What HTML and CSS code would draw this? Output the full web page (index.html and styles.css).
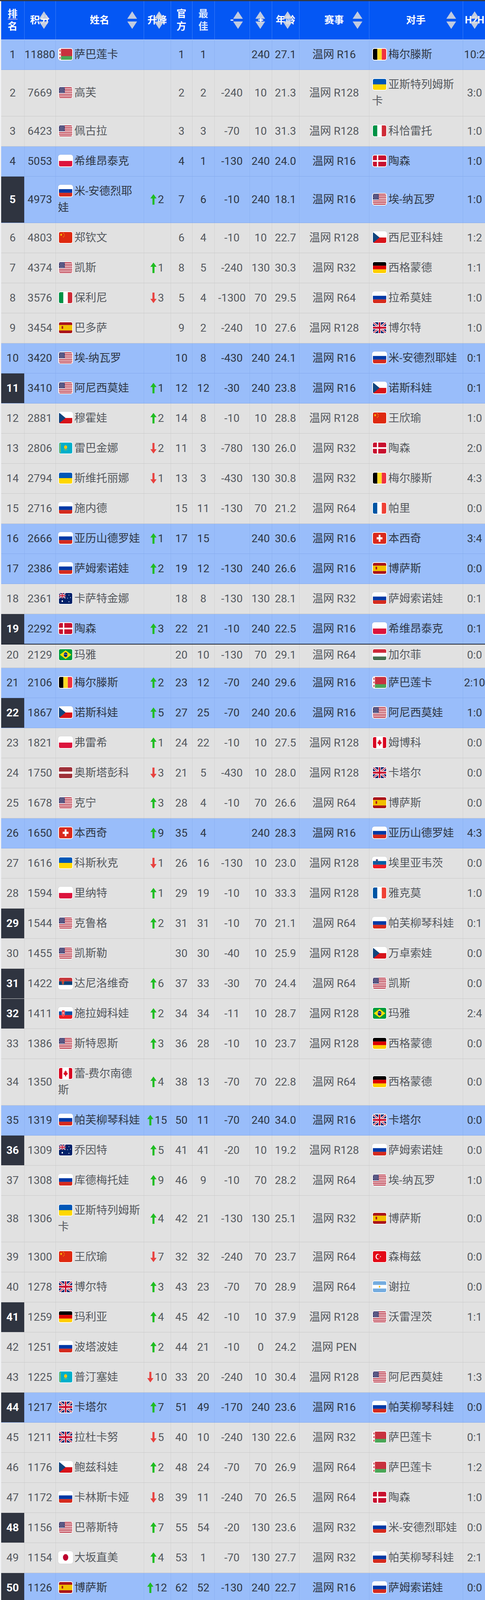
FILE: index.html
```html
<!DOCTYPE html>
<html lang="zh">
<head>
<meta charset="utf-8">
<title>WTA 排名</title>
<link rel="stylesheet" href="styles.css">
</head>
<body>
<svg class="defs" xmlns="http://www.w3.org/2000/svg">
<symbol id="so" viewBox="0 0 27 47"><path d="M13.5 1L26 20H1zM1 27h25L13.5 46z"/></symbol>
<symbol id="au" viewBox="0 0 16 27"><path d="M8 0L16 11H10.6V27H5.4V11H0z"/></symbol>
<symbol id="ad" viewBox="0 0 16 27"><path d="M5.4 0h5.2v16H16L8 27 0 16h5.4z"/></symbol>
<symbol id="blr" viewBox="0 0 30 20" preserveAspectRatio="none"><rect width="30" height="20" fill="#c8313e"/><rect y="13.3" width="30" height="6.7" fill="#4aa657"/><rect width="4.5" height="20" fill="#fff"/><path d="M2.25 1l1.5 2.5-1.5 2.5-1.5-2.5zM2.25 7.5l1.5 2.5-1.5 2.5-1.5-2.5zM2.25 14l1.5 2.5-1.5 2.5-1.5-2.5z" fill="#c8313e"/></symbol>
<symbol id="usa" viewBox="0 0 30 20" preserveAspectRatio="none"><rect width="30" height="20" fill="#fff"/><path fill="#b22234" d="M0 0h30v1.54H0zM0 3.08h30v1.54H0zM0 6.15h30v1.54H0zM0 9.23h30v1.54H0zM0 12.31h30v1.54H0zM0 15.38h30v1.54H0zM0 18.46h30v1.54H0z"/><rect width="13" height="10.77" fill="#3c3b6e"/><g fill="#fff"><circle cx="2" cy="1.8" r=".6"/><circle cx="5" cy="1.8" r=".6"/><circle cx="8" cy="1.8" r=".6"/><circle cx="11" cy="1.8" r=".6"/><circle cx="3.5" cy="4.2" r=".6"/><circle cx="6.5" cy="4.2" r=".6"/><circle cx="9.5" cy="4.2" r=".6"/><circle cx="2" cy="6.6" r=".6"/><circle cx="5" cy="6.6" r=".6"/><circle cx="8" cy="6.6" r=".6"/><circle cx="11" cy="6.6" r=".6"/><circle cx="3.5" cy="9" r=".6"/><circle cx="6.5" cy="9" r=".6"/><circle cx="9.5" cy="9" r=".6"/></g></symbol>
<symbol id="pol" viewBox="0 0 30 20" preserveAspectRatio="none"><rect width="30" height="10" fill="#fff"/><rect y="10" width="30" height="10" fill="#dc143c"/></symbol>
<symbol id="rus" viewBox="0 0 30 20" preserveAspectRatio="none"><rect width="30" height="6.7" fill="#fff"/><rect y="6.6" width="30" height="6.8" fill="#0039a6"/><rect y="13.3" width="30" height="6.7" fill="#d52b1e"/></symbol>
<symbol id="chn" viewBox="0 0 30 20" preserveAspectRatio="none"><rect width="30" height="20" fill="#de2910"/><g fill="#ffde00"><polygon points="5,2 5.68,4.07 7.85,4.07 6.09,5.36 6.76,7.43 5,6.15 3.24,7.43 3.91,5.36 2.15,4.07 4.32,4.07"/><circle cx="10" cy="2" r=".7"/><circle cx="12" cy="4" r=".7"/><circle cx="12" cy="7" r=".7"/><circle cx="10" cy="9" r=".7"/></g></symbol>
<symbol id="cze" viewBox="0 0 30 20" preserveAspectRatio="none"><rect width="30" height="10" fill="#fff"/><rect y="10" width="30" height="10" fill="#d7141a"/><polygon points="0,0 15,10 0,20" fill="#11457e"/></symbol>
<symbol id="ger" viewBox="0 0 30 20" preserveAspectRatio="none"><rect width="30" height="6.7" fill="#000"/><rect y="6.6" width="30" height="6.8" fill="#dd0000"/><rect y="13.3" width="30" height="6.7" fill="#ffce00"/></symbol>
<symbol id="ita" viewBox="0 0 30 20" preserveAspectRatio="none"><rect width="10" height="20" fill="#009246"/><rect x="10" width="10" height="20" fill="#fff"/><rect x="20" width="10" height="20" fill="#ce2b37"/></symbol>
<symbol id="esp" viewBox="0 0 30 20" preserveAspectRatio="none"><rect width="30" height="20" fill="#aa151b"/><rect y="5" width="30" height="10" fill="#f1bf00"/><rect x="6" y="7" width="3.5" height="5" rx="1" fill="#ad1519"/></symbol>
<symbol id="gbr" viewBox="0 0 30 20" preserveAspectRatio="none"><rect width="30" height="20" fill="#012169"/><path d="M0 0L30 20M30 0L0 20" stroke="#fff" stroke-width="4"/><path d="M0 0L30 20M30 0L0 20" stroke="#c8102e" stroke-width="1.4"/><path d="M15 0v20M0 10h30" stroke="#fff" stroke-width="6"/><path d="M15 0v20M0 10h30" stroke="#c8102e" stroke-width="3.4"/></symbol>
<symbol id="den" viewBox="0 0 30 20" preserveAspectRatio="none"><rect width="30" height="20" fill="#c8102e"/><rect x="9" width="3" height="20" fill="#fff"/><rect y="8.5" width="30" height="3" fill="#fff"/></symbol>
<symbol id="kaz" viewBox="0 0 30 20" preserveAspectRatio="none"><rect width="30" height="20" fill="#00afca"/><circle cx="15" cy="8.5" r="3.5" fill="#fec50c"/><path d="M9 12.5q6 3 12 0q-6 1.5-12 0" fill="#fec50c"/><rect x="1.5" y="1" width="1.5" height="18" fill="#fec50c"/></symbol>
<symbol id="ukr" viewBox="0 0 30 20" preserveAspectRatio="none"><rect width="30" height="10" fill="#0057b7"/><rect y="10" width="30" height="10" fill="#ffd700"/></symbol>
<symbol id="bel" viewBox="0 0 30 20" preserveAspectRatio="none"><rect width="10" height="20" fill="#000"/><rect x="10" width="10" height="20" fill="#fdda24"/><rect x="20" width="10" height="20" fill="#ef3340"/></symbol>
<symbol id="fra" viewBox="0 0 30 20" preserveAspectRatio="none"><rect width="10" height="20" fill="#0055a4"/><rect x="10" width="10" height="20" fill="#fff"/><rect x="20" width="10" height="20" fill="#ef4135"/></symbol>
<symbol id="sui" viewBox="0 0 30 20" preserveAspectRatio="none"><rect width="30" height="20" fill="#da291c"/><path d="M13 3.5h4v4.5h4.5v4H17v4.5h-4V12H8.5V8H13z" fill="#fff"/></symbol>
<symbol id="aus" viewBox="0 0 30 20" preserveAspectRatio="none"><rect width="30" height="20" fill="#012169"/><use href="#gbr" width="15" height="10"/><g fill="#fff"><circle cx="7.5" cy="15" r="1.6"/><circle cx="22.5" cy="4" r=".8"/><circle cx="26" cy="8.5" r=".8"/><circle cx="22.5" cy="16" r=".9"/><circle cx="19.5" cy="9.5" r=".8"/></g></symbol>
<symbol id="bra" viewBox="0 0 30 20" preserveAspectRatio="none"><rect width="30" height="20" fill="#009c3b"/><polygon points="15,2 28,10 15,18 2,10" fill="#ffdf00"/><circle cx="15" cy="10" r="4.2" fill="#002776"/><path d="M11 9.3q4-1.3 8 1" stroke="#fff" stroke-width=".7" fill="none"/></symbol>
<symbol id="hun" viewBox="0 0 30 20" preserveAspectRatio="none"><rect width="30" height="6.7" fill="#ce2939"/><rect y="6.6" width="30" height="6.8" fill="#fff"/><rect y="13.3" width="30" height="6.7" fill="#477050"/></symbol>
<symbol id="can" viewBox="0 0 30 20" preserveAspectRatio="none"><rect width="30" height="20" fill="#fff"/><rect width="7.5" height="20" fill="#d80621"/><rect x="22.5" width="7.5" height="20" fill="#d80621"/><polygon points="15,4 16.2,6.5 17.8,6 17.2,9.5 19.5,8 19,10 20.5,10.5 16,13.5 16.3,15.5 15.3,15 15,17 14.7,15 13.7,15.5 14,13.5 9.5,10.5 11,10 10.5,8 12.8,9.5 12.2,6 13.8,6.5" fill="#d80621"/></symbol>
<symbol id="lat" viewBox="0 0 30 20" preserveAspectRatio="none"><rect width="30" height="20" fill="#9e3039"/><rect y="8" width="30" height="4" fill="#fff"/></symbol>
<symbol id="slo" viewBox="0 0 30 20" preserveAspectRatio="none"><rect width="30" height="6.7" fill="#fff"/><rect y="6.6" width="30" height="6.8" fill="#005da4"/><rect y="13.3" width="30" height="6.7" fill="#ed1c24"/><path d="M7 3.5h4v4.5q0 2-2 2.8q-2-.8-2-2.8z" fill="#005da4" stroke="#ed1c24" stroke-width=".4"/></symbol>
<symbol id="srb" viewBox="0 0 30 20" preserveAspectRatio="none"><rect width="30" height="6.7" fill="#c6363c"/><rect y="6.6" width="30" height="6.8" fill="#0c4076"/><rect y="13.3" width="30" height="6.7" fill="#fff"/><path d="M7 4.5h4v5q0 2.2-2 3q-2-.8-2-3z" fill="#c6363c" stroke="#edb92e" stroke-width=".5"/></symbol>
<symbol id="svk" viewBox="0 0 30 20" preserveAspectRatio="none"><rect width="30" height="6.7" fill="#fff"/><rect y="6.6" width="30" height="6.8" fill="#0b4ea2"/><rect y="13.3" width="30" height="6.7" fill="#ee1c25"/><path d="M6.5 4.5h6.5v6q0 3.5-3.25 5q-3.250-1.5-3.25-5z" fill="#ee1c25" stroke="#fff" stroke-width=".6"/><path d="M9.3 6.5h.9v6.5h-.9zM8.3 8h2.9v.8H8.3zM7.9 9.8h3.7v.8H7.9z" fill="#fff"/></symbol>
<symbol id="arg" viewBox="0 0 30 20" preserveAspectRatio="none"><rect width="30" height="20" fill="#74acdf"/><rect y="6.7" width="30" height="6.6" fill="#fff"/><circle cx="15" cy="10" r="1.7" fill="#f6b40e"/></symbol>
<symbol id="tur" viewBox="0 0 30 20" preserveAspectRatio="none"><rect width="30" height="20" fill="#e30a17"/><circle cx="11" cy="10" r="5" fill="#fff"/><circle cx="12.3" cy="10" r="4" fill="#e30a17"/><polygon transform="translate(14.25 7.25) scale(.55)" points="5,2 5.68,4.07 7.85,4.07 6.09,5.36 6.76,7.43 5,6.15 3.24,7.43 3.91,5.36 2.15,4.07 4.32,4.07" fill="#fff"/></symbol>
<symbol id="jpn" viewBox="0 0 30 20" preserveAspectRatio="none"><rect width="30" height="20" fill="#fff"/><circle cx="15" cy="10" r="6" fill="#bc002d"/></symbol>
<symbol id="rou" viewBox="0 0 30 20" preserveAspectRatio="none"><rect width="10" height="20" fill="#002b7f"/><rect x="10" width="10" height="20" fill="#fcd116"/><rect x="20" width="10" height="20" fill="#ce1126"/></symbol>
<symbol id="cro" viewBox="0 0 30 20" preserveAspectRatio="none"><rect width="30" height="6.7" fill="#ff0000"/><rect y="6.6" width="30" height="6.8" fill="#fff"/><rect y="13.3" width="30" height="6.7" fill="#171796"/><rect x="12.5" y="3.8" width="5" height="1.2" fill="#0093dd"/><rect x="12.5" y="5" width="5" height="6.25" fill="#ff0000"/><path fill="#fff" d="M12.5 5h1.25v1.25h-1.25zM15 5h1.25v1.25H15zM13.75 6.25H15V7.5h-1.25zM16.25 6.25h1.25V7.5h-1.25zM12.5 7.5h1.25v1.25h-1.25zM15 7.5h1.25v1.25H15zM13.75 8.75H15V10h-1.25zM16.25 8.75h1.25V10h-1.25zM12.5 10h1.25v1.25h-1.25zM15 10h1.25v1.25H15z"/></symbol>
<symbol id="arm" viewBox="0 0 30 20" preserveAspectRatio="none"><rect width="30" height="6.7" fill="#d90012"/><rect y="6.6" width="30" height="6.8" fill="#0033a0"/><rect y="13.3" width="30" height="6.7" fill="#f2a800"/></symbol>
<symbol id="phi" viewBox="0 0 30 20" preserveAspectRatio="none"><rect width="30" height="10" fill="#0038a8"/><rect y="10" width="30" height="10" fill="#ce1126"/><polygon points="0,0 17,10 0,20" fill="#fff"/><g fill="#fcd116"><circle cx="5.5" cy="10" r="2"/><circle cx="1.8" cy="2.5" r=".8"/><circle cx="1.8" cy="17.5" r=".8"/><circle cx="13.5" cy="10" r=".8"/></g></symbol>
<symbol id="ned" viewBox="0 0 30 20" preserveAspectRatio="none"><rect width="30" height="6.7" fill="#ae1c28"/><rect y="6.6" width="30" height="6.8" fill="#fff"/><rect y="13.3" width="30" height="6.7" fill="#21468b"/></symbol>
<symbol id="col" viewBox="0 0 30 20" preserveAspectRatio="none"><rect width="30" height="10" fill="#fcd116"/><rect y="10" width="30" height="5" fill="#003893"/><rect y="15" width="30" height="5" fill="#ce1126"/></symbol>
<symbol id="mex" viewBox="0 0 30 20" preserveAspectRatio="none"><rect width="10" height="20" fill="#006847"/><rect x="10" width="10" height="20" fill="#fff"/><rect x="20" width="10" height="20" fill="#ce1126"/><circle cx="15" cy="10" r="2.4" fill="#8c5a2b"/></symbol>
<symbol id="tun" viewBox="0 0 30 20" preserveAspectRatio="none"><rect width="30" height="20" fill="#e70013"/><circle cx="15" cy="10" r="5.5" fill="#fff"/><circle cx="15" cy="10" r="4" fill="#e70013"/><circle cx="16.2" cy="10" r="3.3" fill="#fff"/><polygon transform="translate(14.6 8.1) scale(.38)" points="5,2 5.68,4.07 7.85,4.07 6.09,5.36 6.76,7.43 5,6.15 3.24,7.43 3.91,5.36 2.15,4.07 4.32,4.07" fill="#e70013"/></symbol>
<symbol id="bul" viewBox="0 0 30 20" preserveAspectRatio="none"><rect width="30" height="6.7" fill="#fff"/><rect y="6.6" width="30" height="6.8" fill="#00966e"/><rect y="13.3" width="30" height="6.7" fill="#d62612"/></symbol>
</svg>

<div class="board">
<table class="rank-table">
<colgroup><col class="w-rk"><col class="w-pt"><col class="w-nm"><col class="w-ch"><col class="w-of"><col class="w-be"><col class="w-mi"><col class="w-pl"><col class="w-ag"><col class="w-ev"><col class="w-op"><col class="w-hh"></colgroup>
<thead>
<tr>
<th class="h-stack"><span class="mark">排</span>名</th>
<th>积分<svg class="so"><use href="#so"/></svg></th>
<th>姓名<svg class="so"><use href="#so"/></svg></th>
<th>升降<svg class="so"><use href="#so"/></svg></th>
<th class="h-stack">官方</th>
<th class="h-stack h-dim">最佳</th>
<th>-<svg class="so"><use href="#so"/></svg></th>
<th>+<svg class="so"><use href="#so"/></svg></th>
<th>年龄<svg class="so"><use href="#so"/></svg></th>
<th>赛事<svg class="so"><use href="#so"/></svg></th>
<th>对手<svg class="so"><use href="#so"/></svg></th>
<th>H2H<svg class="so"><use href="#so"/></svg></th>
</tr>
</thead>
<tbody>
<tr class="b"><td>1</td><td>11880</td><td class="nm"><svg class="fl"><use href="#blr"/></svg>萨巴莲卡</td><td class="ch"></td><td>1</td><td>1</td><td></td><td>240</td><td>27.1</td><td>温网 R16</td><td class="op"><svg class="fl"><use href="#bel"/></svg>梅尔滕斯</td><td>10:2</td></tr>
<tr><td>2</td><td>7669</td><td class="nm"><svg class="fl"><use href="#usa"/></svg>高芙</td><td class="ch"></td><td>2</td><td>2</td><td>-240</td><td>10</td><td>21.3</td><td>温网 R128</td><td class="op"><svg class="fl"><use href="#ukr"/></svg>亚斯特列姆斯卡</td><td>3:0</td></tr>
<tr><td>3</td><td>6423</td><td class="nm"><svg class="fl"><use href="#usa"/></svg>佩古拉</td><td class="ch"></td><td>3</td><td>3</td><td>-70</td><td>10</td><td>31.3</td><td>温网 R128</td><td class="op"><svg class="fl"><use href="#ita"/></svg>科恰雷托</td><td>1:0</td></tr>
<tr class="b"><td>4</td><td>5053</td><td class="nm"><svg class="fl"><use href="#pol"/></svg>希维昂泰克</td><td class="ch"></td><td>4</td><td>1</td><td>-130</td><td>240</td><td>24.0</td><td>温网 R16</td><td class="op"><svg class="fl"><use href="#den"/></svg>陶森</td><td>1:0</td></tr>
<tr class="b"><td class="dk">5</td><td>4973</td><td class="nm"><svg class="fl"><use href="#rus"/></svg>米-安德烈耶娃</td><td class="ch"><svg class="ar up"><use href="#au"/></svg>2</td><td>7</td><td>6</td><td>-10</td><td>240</td><td>18.1</td><td>温网 R16</td><td class="op"><svg class="fl"><use href="#usa"/></svg>埃-纳瓦罗</td><td>1:0</td></tr>
<tr><td>6</td><td>4803</td><td class="nm"><svg class="fl"><use href="#chn"/></svg>郑钦文</td><td class="ch"></td><td>6</td><td>4</td><td>-10</td><td>10</td><td>22.7</td><td>温网 R128</td><td class="op"><svg class="fl"><use href="#cze"/></svg>西尼亚科娃</td><td>1:2</td></tr>
<tr><td>7</td><td>4374</td><td class="nm"><svg class="fl"><use href="#usa"/></svg>凯斯</td><td class="ch"><svg class="ar up"><use href="#au"/></svg>1</td><td>8</td><td>5</td><td>-240</td><td>130</td><td>30.3</td><td>温网 R32</td><td class="op"><svg class="fl"><use href="#ger"/></svg>西格蒙德</td><td>1:1</td></tr>
<tr><td>8</td><td>3576</td><td class="nm"><svg class="fl"><use href="#ita"/></svg>保利尼</td><td class="ch"><svg class="ar dn"><use href="#ad"/></svg>3</td><td>5</td><td>4</td><td>-1300</td><td>70</td><td>29.5</td><td>温网 R64</td><td class="op"><svg class="fl"><use href="#rus"/></svg>拉希莫娃</td><td>1:0</td></tr>
<tr><td>9</td><td>3454</td><td class="nm"><svg class="fl"><use href="#esp"/></svg>巴多萨</td><td class="ch"></td><td>9</td><td>2</td><td>-240</td><td>10</td><td>27.6</td><td>温网 R128</td><td class="op"><svg class="fl"><use href="#gbr"/></svg>博尔特</td><td>1:0</td></tr>
<tr class="b"><td>10</td><td>3420</td><td class="nm"><svg class="fl"><use href="#usa"/></svg>埃-纳瓦罗</td><td class="ch"></td><td>10</td><td>8</td><td>-430</td><td>240</td><td>24.1</td><td>温网 R16</td><td class="op"><svg class="fl"><use href="#rus"/></svg>米-安德烈耶娃</td><td>0:1</td></tr>
<tr class="b"><td class="dk">11</td><td>3410</td><td class="nm"><svg class="fl"><use href="#usa"/></svg>阿尼西莫娃</td><td class="ch"><svg class="ar up"><use href="#au"/></svg>1</td><td>12</td><td>12</td><td>-30</td><td>240</td><td>23.8</td><td>温网 R16</td><td class="op"><svg class="fl"><use href="#cze"/></svg>诺斯科娃</td><td>0:1</td></tr>
<tr><td>12</td><td>2881</td><td class="nm"><svg class="fl"><use href="#cze"/></svg>穆霍娃</td><td class="ch"><svg class="ar up"><use href="#au"/></svg>2</td><td>14</td><td>8</td><td>-10</td><td>10</td><td>28.8</td><td>温网 R128</td><td class="op"><svg class="fl"><use href="#chn"/></svg>王欣瑜</td><td>1:0</td></tr>
<tr><td>13</td><td>2806</td><td class="nm"><svg class="fl"><use href="#kaz"/></svg>雷巴金娜</td><td class="ch"><svg class="ar dn"><use href="#ad"/></svg>2</td><td>11</td><td>3</td><td>-780</td><td>130</td><td>26.0</td><td>温网 R32</td><td class="op"><svg class="fl"><use href="#den"/></svg>陶森</td><td>2:0</td></tr>
<tr><td>14</td><td>2794</td><td class="nm"><svg class="fl"><use href="#ukr"/></svg>斯维托丽娜</td><td class="ch"><svg class="ar dn"><use href="#ad"/></svg>1</td><td>13</td><td>3</td><td>-430</td><td>130</td><td>30.8</td><td>温网 R32</td><td class="op"><svg class="fl"><use href="#bel"/></svg>梅尔滕斯</td><td>4:3</td></tr>
<tr><td>15</td><td>2716</td><td class="nm"><svg class="fl"><use href="#rus"/></svg>施内德</td><td class="ch"></td><td>15</td><td>11</td><td>-130</td><td>70</td><td>21.2</td><td>温网 R64</td><td class="op"><svg class="fl"><use href="#fra"/></svg>帕里</td><td>0:0</td></tr>
<tr class="b"><td>16</td><td>2666</td><td class="nm"><svg class="fl"><use href="#rus"/></svg>亚历山德罗娃</td><td class="ch"><svg class="ar up"><use href="#au"/></svg>1</td><td>17</td><td>15</td><td></td><td>240</td><td>30.6</td><td>温网 R16</td><td class="op"><svg class="fl"><use href="#sui"/></svg>本西奇</td><td>3:4</td></tr>
<tr class="b"><td>17</td><td>2386</td><td class="nm"><svg class="fl"><use href="#rus"/></svg>萨姆索诺娃</td><td class="ch"><svg class="ar up"><use href="#au"/></svg>2</td><td>19</td><td>12</td><td>-130</td><td>240</td><td>26.6</td><td>温网 R16</td><td class="op"><svg class="fl"><use href="#esp"/></svg>博萨斯</td><td>0:0</td></tr>
<tr><td>18</td><td>2361</td><td class="nm"><svg class="fl"><use href="#aus"/></svg>卡萨特金娜</td><td class="ch"></td><td>18</td><td>8</td><td>-130</td><td>130</td><td>28.1</td><td>温网 R32</td><td class="op"><svg class="fl"><use href="#rus"/></svg>萨姆索诺娃</td><td>0:1</td></tr>
<tr class="b"><td class="dk">19</td><td>2292</td><td class="nm"><svg class="fl"><use href="#den"/></svg>陶森</td><td class="ch"><svg class="ar up"><use href="#au"/></svg>3</td><td>22</td><td>21</td><td>-10</td><td>240</td><td>22.5</td><td>温网 R16</td><td class="op"><svg class="fl"><use href="#pol"/></svg>希维昂泰克</td><td>0:1</td></tr>
<tr class="cut"><td>20</td><td>2129</td><td class="nm"><svg class="fl"><use href="#bra"/></svg>玛雅</td><td class="ch"></td><td>20</td><td>10</td><td>-130</td><td>70</td><td>29.1</td><td>温网 R64</td><td class="op"><svg class="fl"><use href="#hun"/></svg>加尔菲</td><td>0:0</td></tr>
<tr class="b"><td>21</td><td>2106</td><td class="nm"><svg class="fl"><use href="#bel"/></svg>梅尔滕斯</td><td class="ch"><svg class="ar up"><use href="#au"/></svg>2</td><td>23</td><td>12</td><td>-70</td><td>240</td><td>29.6</td><td>温网 R16</td><td class="op"><svg class="fl"><use href="#blr"/></svg>萨巴莲卡</td><td>2:10</td></tr>
<tr class="b"><td class="dk">22</td><td>1867</td><td class="nm"><svg class="fl"><use href="#cze"/></svg>诺斯科娃</td><td class="ch"><svg class="ar up"><use href="#au"/></svg>5</td><td>27</td><td>25</td><td>-70</td><td>240</td><td>20.6</td><td>温网 R16</td><td class="op"><svg class="fl"><use href="#usa"/></svg>阿尼西莫娃</td><td>1:0</td></tr>
<tr><td>23</td><td>1821</td><td class="nm"><svg class="fl"><use href="#pol"/></svg>弗雷希</td><td class="ch"><svg class="ar up"><use href="#au"/></svg>1</td><td>24</td><td>22</td><td>-10</td><td>10</td><td>27.5</td><td>温网 R128</td><td class="op"><svg class="fl"><use href="#can"/></svg>姆博科</td><td>0:0</td></tr>
<tr><td>24</td><td>1750</td><td class="nm"><svg class="fl"><use href="#lat"/></svg>奥斯塔彭科</td><td class="ch"><svg class="ar dn"><use href="#ad"/></svg>3</td><td>21</td><td>5</td><td>-430</td><td>10</td><td>28.0</td><td>温网 R128</td><td class="op"><svg class="fl"><use href="#gbr"/></svg>卡塔尔</td><td>0:0</td></tr>
<tr><td>25</td><td>1678</td><td class="nm"><svg class="fl"><use href="#usa"/></svg>克宁</td><td class="ch"><svg class="ar up"><use href="#au"/></svg>3</td><td>28</td><td>4</td><td>-10</td><td>70</td><td>26.6</td><td>温网 R64</td><td class="op"><svg class="fl"><use href="#esp"/></svg>博萨斯</td><td>0:0</td></tr>
<tr class="b"><td>26</td><td>1650</td><td class="nm"><svg class="fl"><use href="#sui"/></svg>本西奇</td><td class="ch"><svg class="ar up"><use href="#au"/></svg>9</td><td>35</td><td>4</td><td></td><td>240</td><td>28.3</td><td>温网 R16</td><td class="op"><svg class="fl"><use href="#rus"/></svg>亚历山德罗娃</td><td>4:3</td></tr>
<tr><td>27</td><td>1616</td><td class="nm"><svg class="fl"><use href="#ukr"/></svg>科斯秋克</td><td class="ch"><svg class="ar dn"><use href="#ad"/></svg>1</td><td>26</td><td>16</td><td>-130</td><td>10</td><td>23.0</td><td>温网 R128</td><td class="op"><svg class="fl"><use href="#slo"/></svg>埃里亚韦茨</td><td>0:0</td></tr>
<tr><td>28</td><td>1594</td><td class="nm"><svg class="fl"><use href="#pol"/></svg>里纳特</td><td class="ch"><svg class="ar up"><use href="#au"/></svg>1</td><td>29</td><td>19</td><td>-10</td><td>10</td><td>33.3</td><td>温网 R128</td><td class="op"><svg class="fl"><use href="#fra"/></svg>雅克莫</td><td>1:0</td></tr>
<tr><td class="dk">29</td><td>1544</td><td class="nm"><svg class="fl"><use href="#usa"/></svg>克鲁格</td><td class="ch"><svg class="ar up"><use href="#au"/></svg>2</td><td>31</td><td>31</td><td>-10</td><td>70</td><td>21.1</td><td>温网 R64</td><td class="op"><svg class="fl"><use href="#rus"/></svg>帕芙柳琴科娃</td><td>0:1</td></tr>
<tr><td>30</td><td>1455</td><td class="nm"><svg class="fl"><use href="#usa"/></svg>凯斯勒</td><td class="ch"></td><td>30</td><td>30</td><td>-40</td><td>10</td><td>25.9</td><td>温网 R128</td><td class="op"><svg class="fl"><use href="#cze"/></svg>万卓索娃</td><td>0:0</td></tr>
<tr><td class="dk">31</td><td>1422</td><td class="nm"><svg class="fl"><use href="#srb"/></svg>达尼洛维奇</td><td class="ch"><svg class="ar up"><use href="#au"/></svg>6</td><td>37</td><td>33</td><td>-30</td><td>70</td><td>24.4</td><td>温网 R64</td><td class="op"><svg class="fl"><use href="#usa"/></svg>凯斯</td><td>0:0</td></tr>
<tr><td class="dk">32</td><td>1411</td><td class="nm"><svg class="fl"><use href="#svk"/></svg>施拉姆科娃</td><td class="ch"><svg class="ar up"><use href="#au"/></svg>2</td><td>34</td><td>34</td><td>-11</td><td>10</td><td>28.7</td><td>温网 R128</td><td class="op"><svg class="fl"><use href="#bra"/></svg>玛雅</td><td>2:4</td></tr>
<tr><td>33</td><td>1386</td><td class="nm"><svg class="fl"><use href="#usa"/></svg>斯特恩斯</td><td class="ch"><svg class="ar up"><use href="#au"/></svg>3</td><td>36</td><td>28</td><td>-10</td><td>10</td><td>23.7</td><td>温网 R128</td><td class="op"><svg class="fl"><use href="#ger"/></svg>西格蒙德</td><td>0:0</td></tr>
<tr><td>34</td><td>1350</td><td class="nm"><svg class="fl"><use href="#can"/></svg>蕾-费尔南德斯</td><td class="ch"><svg class="ar up"><use href="#au"/></svg>4</td><td>38</td><td>13</td><td>-70</td><td>70</td><td>22.8</td><td>温网 R64</td><td class="op"><svg class="fl"><use href="#ger"/></svg>西格蒙德</td><td>0:0</td></tr>
<tr class="b"><td>35</td><td>1319</td><td class="nm"><svg class="fl"><use href="#rus"/></svg>帕芙柳琴科娃</td><td class="ch"><svg class="ar up"><use href="#au"/></svg>15</td><td>50</td><td>11</td><td>-70</td><td>240</td><td>34.0</td><td>温网 R16</td><td class="op"><svg class="fl"><use href="#gbr"/></svg>卡塔尔</td><td>0:0</td></tr>
<tr><td class="dk">36</td><td>1309</td><td class="nm"><svg class="fl"><use href="#aus"/></svg>乔因特</td><td class="ch"><svg class="ar up"><use href="#au"/></svg>5</td><td>41</td><td>41</td><td>-20</td><td>10</td><td>19.2</td><td>温网 R128</td><td class="op"><svg class="fl"><use href="#rus"/></svg>萨姆索诺娃</td><td>0:0</td></tr>
<tr><td>37</td><td>1308</td><td class="nm"><svg class="fl"><use href="#rus"/></svg>库德梅托娃</td><td class="ch"><svg class="ar up"><use href="#au"/></svg>9</td><td>46</td><td>9</td><td>-10</td><td>70</td><td>28.2</td><td>温网 R64</td><td class="op"><svg class="fl"><use href="#usa"/></svg>埃-纳瓦罗</td><td>1:0</td></tr>
<tr><td>38</td><td>1306</td><td class="nm"><svg class="fl"><use href="#ukr"/></svg>亚斯特列姆斯卡</td><td class="ch"><svg class="ar up"><use href="#au"/></svg>4</td><td>42</td><td>21</td><td>-130</td><td>130</td><td>25.1</td><td>温网 R32</td><td class="op"><svg class="fl"><use href="#esp"/></svg>博萨斯</td><td>0:0</td></tr>
<tr><td>39</td><td>1300</td><td class="nm"><svg class="fl"><use href="#chn"/></svg>王欣瑜</td><td class="ch"><svg class="ar dn"><use href="#ad"/></svg>7</td><td>32</td><td>32</td><td>-240</td><td>70</td><td>23.7</td><td>温网 R64</td><td class="op"><svg class="fl"><use href="#tur"/></svg>森梅兹</td><td>0:0</td></tr>
<tr><td>40</td><td>1278</td><td class="nm"><svg class="fl"><use href="#gbr"/></svg>博尔特</td><td class="ch"><svg class="ar up"><use href="#au"/></svg>3</td><td>43</td><td>23</td><td>-70</td><td>70</td><td>28.9</td><td>温网 R64</td><td class="op"><svg class="fl"><use href="#arg"/></svg>谢拉</td><td>0:0</td></tr>
<tr><td class="dk">41</td><td>1259</td><td class="nm"><svg class="fl"><use href="#ger"/></svg>玛利亚</td><td class="ch"><svg class="ar up"><use href="#au"/></svg>4</td><td>45</td><td>42</td><td>-10</td><td>10</td><td>37.9</td><td>温网 R128</td><td class="op"><svg class="fl"><use href="#usa"/></svg>沃雷涅茨</td><td>1:1</td></tr>
<tr><td>42</td><td>1251</td><td class="nm"><svg class="fl"><use href="#rus"/></svg>波塔波娃</td><td class="ch"><svg class="ar up"><use href="#au"/></svg>2</td><td>44</td><td>21</td><td>-10</td><td>0</td><td>24.2</td><td>温网 PEN</td><td class="op"></td><td></td></tr>
<tr><td>43</td><td>1225</td><td class="nm"><svg class="fl"><use href="#kaz"/></svg>普汀塞娃</td><td class="ch"><svg class="ar dn"><use href="#ad"/></svg>10</td><td>33</td><td>20</td><td>-240</td><td>10</td><td>30.4</td><td>温网 R128</td><td class="op"><svg class="fl"><use href="#usa"/></svg>阿尼西莫娃</td><td>1:3</td></tr>
<tr class="b"><td class="dk">44</td><td>1217</td><td class="nm"><svg class="fl"><use href="#gbr"/></svg>卡塔尔</td><td class="ch"><svg class="ar up"><use href="#au"/></svg>7</td><td>51</td><td>49</td><td>-170</td><td>240</td><td>23.6</td><td>温网 R16</td><td class="op"><svg class="fl"><use href="#rus"/></svg>帕芙柳琴科娃</td><td>0:0</td></tr>
<tr><td>45</td><td>1211</td><td class="nm"><svg class="fl"><use href="#gbr"/></svg>拉杜卡努</td><td class="ch"><svg class="ar dn"><use href="#ad"/></svg>5</td><td>40</td><td>10</td><td>-240</td><td>130</td><td>22.6</td><td>温网 R32</td><td class="op"><svg class="fl"><use href="#blr"/></svg>萨巴莲卡</td><td>0:1</td></tr>
<tr><td>46</td><td>1176</td><td class="nm"><svg class="fl"><use href="#cze"/></svg>鲍兹科娃</td><td class="ch"><svg class="ar up"><use href="#au"/></svg>2</td><td>48</td><td>24</td><td>-70</td><td>70</td><td>26.9</td><td>温网 R64</td><td class="op"><svg class="fl"><use href="#blr"/></svg>萨巴莲卡</td><td>1:2</td></tr>
<tr><td>47</td><td>1172</td><td class="nm"><svg class="fl"><use href="#rus"/></svg>卡林斯卡娅</td><td class="ch"><svg class="ar dn"><use href="#ad"/></svg>8</td><td>39</td><td>11</td><td>-240</td><td>70</td><td>26.5</td><td>温网 R64</td><td class="op"><svg class="fl"><use href="#den"/></svg>陶森</td><td>1:0</td></tr>
<tr><td class="dk">48</td><td>1156</td><td class="nm"><svg class="fl"><use href="#usa"/></svg>巴蒂斯特</td><td class="ch"><svg class="ar up"><use href="#au"/></svg>7</td><td>55</td><td>54</td><td>-20</td><td>130</td><td>23.6</td><td>温网 R32</td><td class="op"><svg class="fl"><use href="#rus"/></svg>米-安德烈耶娃</td><td>0:0</td></tr>
<tr><td>49</td><td>1154</td><td class="nm"><svg class="fl"><use href="#jpn"/></svg>大坂直美</td><td class="ch"><svg class="ar up"><use href="#au"/></svg>4</td><td>53</td><td>1</td><td>-70</td><td>130</td><td>27.7</td><td>温网 R32</td><td class="op"><svg class="fl"><use href="#rus"/></svg>帕芙柳琴科娃</td><td>2:1</td></tr>
<tr class="b"><td class="dk">50</td><td>1126</td><td class="nm"><svg class="fl"><use href="#esp"/></svg>博萨斯</td><td class="ch"><svg class="ar up"><use href="#au"/></svg>12</td><td>62</td><td>52</td><td>-130</td><td>240</td><td>22.7</td><td>温网 R16</td><td class="op"><svg class="fl"><use href="#rus"/></svg>萨姆索诺娃</td><td>0:0</td></tr>
<tr><td>51</td><td>1116</td><td class="nm"><svg class="fl"><use href="#rou"/></svg>克里斯蒂安</td><td class="ch"><svg class="ar up"><use href="#au"/></svg>1</td><td>52</td><td>49</td><td>-25</td><td>10</td><td>27.0</td><td>温网 R128</td><td class="op"><svg class="fl"><use href="#tur"/></svg>森梅兹</td><td>0:0</td></tr>
<tr><td>52</td><td>1103</td><td class="nm"><svg class="fl"><use href="#cro"/></svg>维基奇</td><td class="ch st"><svg class="ar dn"><use href="#ad"/></svg>27</td><td>25</td><td>17</td><td>-780</td><td>70</td><td>29.0</td><td>温网 R64</td><td class="op"><svg class="fl"><use href="#esp"/></svg>布克沙</td><td>1:0</td></tr>
<tr><td>53</td><td>1090</td><td class="nm"><svg class="fl"><use href="#arm"/></svg>阿瓦涅相</td><td class="ch"><svg class="ar dn"><use href="#ad"/></svg>4</td><td>49</td><td>36</td><td>-70</td><td>10</td><td>22.8</td><td>温网 R128</td><td class="op"><svg class="fl"><use href="#kaz"/></svg>雷巴金娜</td><td>0:1</td></tr>
<tr><td class="dk">54</td><td>1050</td><td class="nm"><svg class="fl"><use href="#ger"/></svg>利斯</td><td class="ch"><svg class="ar up"><use href="#au"/></svg>7</td><td>61</td><td>59</td><td>-40</td><td>70</td><td>23.4</td><td>温网 R64</td><td class="op"><svg class="fl"><use href="#cze"/></svg>诺斯科娃</td><td>0:2</td></tr>
<tr><td class="dk">55</td><td>1021</td><td class="nm"><svg class="fl"><use href="#phi"/></svg>伊埃拉</td><td class="ch"><svg class="ar up"><use href="#au"/></svg>1</td><td>56</td><td>56</td><td>-30</td><td>10</td><td>20.1</td><td>温网 R128</td><td class="op"><svg class="fl"><use href="#cze"/></svg>克赖奇科娃</td><td>0:0</td></tr>
<tr><td>56</td><td>998</td><td class="nm"><svg class="fl"><use href="#rou"/></svg>鲁塞</td><td class="ch"><svg class="ar up"><use href="#au"/></svg>2</td><td>58</td><td>51</td><td>-40</td><td>10</td><td>27.6</td><td>温网 R128</td><td class="op"><svg class="fl"><use href="#usa"/></svg>凯斯</td><td>0:1</td></tr>
<tr><td>57</td><td>997</td><td class="nm"><svg class="fl"><use href="#usa"/></svg>多勒海德</td><td class="ch"><svg class="ar up"><use href="#au"/></svg>10</td><td>67</td><td>41</td><td>-10</td><td>70</td><td>26.8</td><td>温网 R64</td><td class="op"><svg class="fl"><use href="#cze"/></svg>克赖奇科娃</td><td>0:1</td></tr>
<tr><td>58</td><td>993</td><td class="nm"><svg class="fl"><use href="#usa"/></svg>帕克斯</td><td class="ch"><svg class="ar up"><use href="#au"/></svg>2</td><td>60</td><td>40</td><td>-40</td><td>10</td><td>24.5</td><td>温网 R128</td><td class="op"><svg class="fl"><use href="#sui"/></svg>本西奇</td><td>1:1</td></tr>
<tr><td>59</td><td>988</td><td class="nm"><svg class="fl"><use href="#rus"/></svg>波-库德梅托娃</td><td class="ch"><svg class="ar up"><use href="#au"/></svg>5</td><td>64</td><td>54</td><td>-3</td><td>10</td><td>22.0</td><td>温网 R128</td><td class="op"><svg class="fl"><use href="#pol"/></svg>希维昂泰克</td><td>0:0</td></tr>
<tr><td class="dk">60</td><td>972</td><td class="nm"><svg class="fl"><use href="#ned"/></svg>拉门斯</td><td class="ch"><svg class="ar up"><use href="#au"/></svg>9</td><td>69</td><td>64</td><td>-17</td><td>70</td><td>26.0</td><td>温网 R64</td><td class="op"><svg class="fl"><use href="#rus"/></svg>亚历山德罗娃</td><td>0:0</td></tr>
<tr><td>61</td><td>970</td><td class="nm"><svg class="fl"><use href="#col"/></svg>奥索里奥</td><td class="ch"><svg class="ar dn"><use href="#ad"/></svg>4</td><td>57</td><td>33</td><td>-70</td><td>10</td><td>23.5</td><td>温网 R128</td><td class="op"><svg class="fl"><use href="#usa"/></svg>科林斯</td><td>0:1</td></tr>
<tr><td>62</td><td>963</td><td class="nm"><svg class="fl"><use href="#usa"/></svg>安-李</td><td class="ch"><svg class="ar up"><use href="#au"/></svg>3</td><td>65</td><td>44</td><td>-83</td><td>70</td><td>25.0</td><td>温网 R64</td><td class="op"><svg class="fl"><use href="#bel"/></svg>梅尔滕斯</td><td>0:1</td></tr>
<tr><td class="dk">63</td><td>953</td><td class="nm"><svg class="fl"><use href="#fra"/></svg>布瓦松</td><td class="ch"><svg class="ar up"><use href="#au"/></svg>3</td><td>66</td><td>65</td><td></td><td>2</td><td>22.1</td><td>温网 Q1</td><td class="op"><svg class="fl"><use href="#can"/></svg>布兰斯汀</td><td>0:0</td></tr>
<tr><td>64</td><td>952</td><td class="nm"><svg class="fl"><use href="#usa"/></svg>科林斯</td><td class="ch"><svg class="ar dn"><use href="#ad"/></svg>10</td><td>54</td><td>7</td><td>-240</td><td>130</td><td>31.5</td><td>温网 R32</td><td class="op"><svg class="fl"><use href="#pol"/></svg>希维昂泰克</td><td>2:7</td></tr>
<tr class="b"><td class="dk">65</td><td>949</td><td class="nm"><svg class="fl"><use href="#arg"/></svg>谢拉</td><td class="ch st"><svg class="ar up"><use href="#au"/></svg>36</td><td>101</td><td>100</td><td>-37</td><td>270</td><td>21.0</td><td>温网 R16</td><td class="op"><svg class="fl"><use href="#ger"/></svg>西格蒙德</td><td>0:0</td></tr>
<tr><td>66</td><td>943</td><td class="nm"><svg class="fl"><use href="#cze"/></svg>万卓索娃</td><td class="ch"><svg class="ar up"><use href="#au"/></svg>7</td><td>73</td><td>6</td><td>-10</td><td>70</td><td>26.0</td><td>温网 R64</td><td class="op"><svg class="fl"><use href="#gbr"/></svg>拉杜卡努</td><td>2:1</td></tr>
<tr><td>67</td><td>941</td><td class="nm"><svg class="fl"><use href="#rus"/></svg>拉希莫娃</td><td class="ch"><svg class="ar up"><use href="#au"/></svg>13</td><td>80</td><td>60</td><td>-35</td><td>130</td><td>23.8</td><td>温网 R32</td><td class="op"><svg class="fl"><use href="#cze"/></svg>诺斯科娃</td><td>0:0</td></tr>
<tr><td>68</td><td>938</td><td class="nm"><svg class="fl"><use href="#ita"/></svg>布龙泽蒂</td><td class="ch"><svg class="ar dn"><use href="#ad"/></svg>5</td><td>63</td><td>46</td><td>-135</td><td>70</td><td>26.5</td><td>温网 R64</td><td class="op"><svg class="fl"><use href="#rus"/></svg>米-安德烈耶娃</td><td>0:0</td></tr>
<tr><td>69</td><td>926</td><td class="nm"><svg class="fl"><use href="#mex"/></svg>扎拉祖哈</td><td class="ch"><svg class="ar up"><use href="#au"/></svg>2</td><td>71</td><td>51</td><td>-31</td><td>70</td><td>27.7</td><td>温网 R64</td><td class="op"><svg class="fl"><use href="#usa"/></svg>阿尼西莫娃</td><td>0:2</td></tr>
<tr><td>70</td><td>903</td><td class="nm"><svg class="fl"><use href="#tun"/></svg>贾贝乌尔</td><td class="ch"><svg class="ar dn"><use href="#ad"/></svg>11</td><td>59</td><td>2</td><td>-130</td><td>10</td><td>30.8</td><td>温网 R128</td><td class="op"><svg class="fl"><use href="#bul"/></svg>托莫娃</td><td>1:0</td></tr>
<tr><td>71</td><td>895</td><td class="nm"><svg class="fl"><use href="#ukr"/></svg>斯塔罗杜布采娃</td><td class="ch"><svg class="ar dn"><use href="#ad"/></svg>3</td><td>68</td><td>67</td><td>-111</td><td>70</td><td>25.3</td><td>温网 R64</td><td class="op"><svg class="fl"><use href="#rus"/></svg>萨姆索诺娃</td><td>1:0</td></tr>
<tr><td>72</td><td>884</td><td class="nm"><svg class="fl"><use href="#jpn"/></svg>内岛萌夏</td><td class="ch"></td><td>72</td><td>47</td><td>-10</td><td>10</td><td>23.9</td><td>温网 R128</td><td class="op"><svg class="fl"><use href="#rus"/></svg>施内德</td><td>0:0</td></tr>
<tr class="b"><td>73</td><td>874</td><td class="nm"><svg class="fl"><use href="#ger"/></svg>西格蒙德</td><td class="ch"><svg class="ar up"><use href="#au"/></svg>31</td><td>104</td><td>27</td><td>-70</td><td>240</td><td>37.3</td><td>温网 R16</td><td class="op"><svg class="fl"><use href="#arg"/></svg>谢拉</td><td>0:0</td></tr>
<tr><td class="dk">74</td><td>872</td><td class="nm"><svg class="fl"><use href="#tur"/></svg>森梅兹</td><td class="ch"><svg class="ar up"><use href="#au"/></svg>14</td><td>88</td><td>76</td><td>-30</td><td>130</td><td>23.1</td><td>温网 R32</td><td class="op"><svg class="fl"><use href="#rus"/></svg>亚历山德罗娃</td><td>0:0</td></tr>
</tbody>
</table>
</div>
</body>
</html>
```

FILE: styles.css
```css
* { box-sizing: border-box; margin: 0; padding: 0; }
html { overflow: hidden; background: #f1f2f4; }
body {
  width: 1242px;
  overflow: hidden;
  font-family: Roboto, "Noto Sans CJK SC", sans-serif;
  background: #f1f2f4;
}
.defs { position: absolute; width: 0; height: 0; overflow: hidden; }

.board {
  width: 1248px;
  padding-left: 3px;
  border-top: 3px solid #333a46;
}

.rank-table {
  width: 1242px;
  table-layout: fixed;
  border-collapse: collapse;
  font-size: 28px;
  line-height: 42px;
  color: #55595f;
}

.w-rk { width: 59px; }
.w-pt { width: 80px; }
.w-nm { width: 226px; }
.w-ch { width: 69px; }
.w-of { width: 55px; }
.w-be { width: 57px; }
.w-mi { width: 90px; }
.w-pl { width: 57px; }
.w-ag { width: 70px; }
.w-ev { width: 179px; }
.w-op { width: 240px; }
.w-hh { width: 60px; }

th {
  position: relative;
  height: 98px;
  padding: 0 5px;
  background: #0457f4;
  color: #fff;
  font-size: 25px;
  line-height: 32px;
  font-weight: 700;
  text-align: center;
  vertical-align: middle;
  border-left: 1px solid #3a7cf6;
  border-bottom: 1px solid #b9cdf0;
}
th:first-child { border-left: none; }
th.h-stack { padding: 0 6px; }
th.h-dim { color: rgba(255, 255, 255, 0.88); }

.mark {
  text-decoration: underline;
  text-decoration-color: #b6a2ee;
  text-decoration-thickness: 2px;
  text-underline-offset: 4px;
}

.so {
  position: absolute;
  right: 16px;
  top: 50%;
  width: 27px;
  height: 47px;
  margin-top: -24px;
  fill: rgba(214, 216, 222, 0.9);
}

td {
  padding: 17px 0;
  text-align: center;
  vertical-align: middle;
  background: #e1e1e1;
  border-left: 1px solid #d2d2d2;
  border-bottom: 1px solid #c9c9c9;
  white-space: nowrap;
}
td:first-child { border-left: none; }

td.nm, td.op {
  text-align: left;
  white-space: normal;
  padding-right: 8px;
}
td.nm { padding-left: 6px; }
td.op { padding-left: 7px; }

.fl {
  display: inline-block;
  width: 38px;
  height: 32px;
  margin-right: 4px;
  border: 2px solid #fff;
  border-radius: 6px;
  background: #fff;
  vertical-align: middle;
  position: relative;
  top: -2px;
  box-shadow: 0 0 0 1px rgba(0, 0, 0, 0.05);
}

.ar {
  display: inline-block;
  width: 16px;
  height: 27px;
  margin-right: 3px;
  vertical-align: -4px;
}
.ar.up { fill: #1fbd22; }
.ar.dn { fill: #e8423f; }
td.st { white-space: normal; }
td.st .ar { display: block; margin: 7px auto 8px; }

tr.b td {
  background: #99bdfa;
  color: #2f3745;
  border-left-color: #8cb1f2;
  border-bottom-color: #85aaee;
}
tr.b td:first-child { border-left: none; }

td.dk,
tr.b td.dk {
  background: #2f3440;
  color: #fff;
  font-weight: 700;
}

tr.cut td {
  padding-top: 6px;
  padding-bottom: 11px;
  border-top: 2px solid #1d2330;
}
```
